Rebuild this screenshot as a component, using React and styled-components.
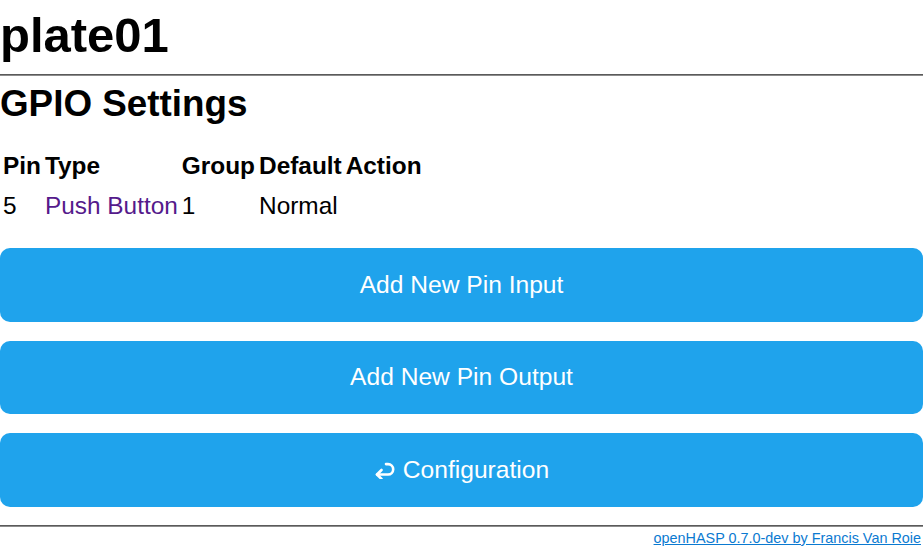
import React from "react";
import styled, { createGlobalStyle } from "styled-components";

const GlobalStyle = createGlobalStyle`
  html, body {
    margin: 0;
    padding: 0;
    background: #fff;
    color: #000;
    font-family: "Liberation Sans", Arial, sans-serif;
  }
`;

const Page = styled.div`
  display: flex;
  flex-direction: column;
  width: 923px;
`;

const Title = styled.h1`
  margin: 8px 0 11px;
  font-size: 49px;
  font-weight: bold;
  line-height: 55px;
`;

const Rule = styled.hr`
  margin: 0;
  height: 0;
  border: 0;
  border-top: 1px solid #5a5a5a;
  border-bottom: 1px solid #8c8c8c;
`;

const Subtitle = styled.h2`
  margin: 7px 0 20.5px;
  font-size: 36.8px;
  font-weight: bold;
  line-height: 41px;
`;

const Table = styled.table`
  border-spacing: 2px;
  font-size: 24.4px;
  margin-bottom: 21.5px;
  align-self: flex-start;
`;

const Th = styled.th`
  padding: 5.5px 1px;
  text-align: left;
  font-weight: bold;
  line-height: 27px;
`;

const Td = styled.td`
  padding: 5.5px 1px;
  line-height: 27px;
`;

const TypeLink = styled.a`
  color: #551a8b;
  text-decoration: none;
`;

const Buttons = styled.div`
  display: flex;
  flex-direction: column;
  gap: 19px;
`;

const Button = styled.button`
  display: flex;
  align-items: center;
  justify-content: center;
  gap: 7px;
  height: 73.5px;
  width: 100%;
  border: 0;
  border-radius: 10px;
  background: #1fa3ec;
  color: #fff;
  font-family: "Liberation Sans", Arial, sans-serif;
  font-size: 24.6px;
  cursor: pointer;
`;

const ReturnIcon = () => (
  <svg width="22" height="19" viewBox="0 0 22 19" fill="none" stroke="#fff" strokeWidth="2.6" strokeLinecap="round" strokeLinejoin="round">
    <path d="M3 14.5 H14 a5.2 5.2 0 0 0 0 -10.4 H12" />
    <path d="M7.5 10 L3 14.5 L7.5 19" />
  </svg>
);

const Footer = styled.div`
  margin-top: 18px;
`;

const Credits = styled.div`
  display: flex;
  justify-content: flex-end;
  padding: 3px 2px 0 0;
  font-size: 14.4px;
`;

const CreditLink = styled.a`
  color: #0b7ad1;
`;

const pins = [{ pin: "5", type: "Push Button", group: "1", def: "Normal", action: "" }];

export default function App() {
  return (
    <>
      <GlobalStyle />
      <Page>
        <Title>plate01</Title>
        <Rule />
        <Subtitle>GPIO Settings</Subtitle>
        <Table>
          <thead>
            <tr>
              <Th>Pin</Th>
              <Th>Type</Th>
              <Th>Group</Th>
              <Th>Default</Th>
              <Th>Action</Th>
            </tr>
          </thead>
          <tbody>
            {pins.map((p) => (
              <tr key={p.pin}>
                <Td>{p.pin}</Td>
                <Td>
                  <TypeLink href="#">{p.type}</TypeLink>
                </Td>
                <Td>{p.group}</Td>
                <Td>{p.def}</Td>
                <Td>{p.action}</Td>
              </tr>
            ))}
          </tbody>
        </Table>
        <Buttons>
          <Button>Add New Pin Input</Button>
          <Button>Add New Pin Output</Button>
          <Button>
            <ReturnIcon />
            Configuration
          </Button>
        </Buttons>
        <Footer>
          <Rule />
          <Credits>
            <CreditLink href="#">openHASP 0.7.0-dev by Francis Van Roie</CreditLink>
          </Credits>
        </Footer>
      </Page>
    </>
  );
}
